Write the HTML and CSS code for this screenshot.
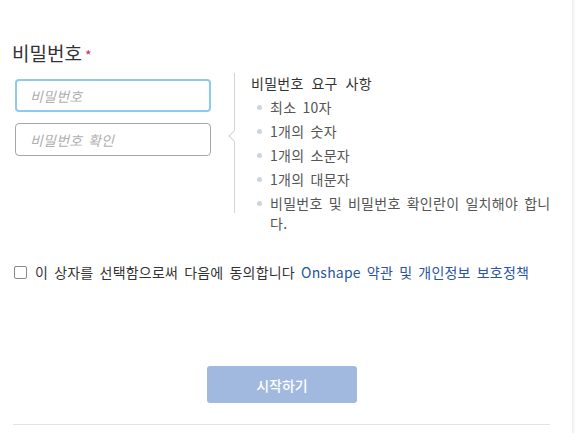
FILE: index.html
```html
<!DOCTYPE html>
<html lang="ko">
<head>
<meta charset="utf-8">
<link rel="stylesheet" href="styles.css">
</head>
<body>
<div class="page">
  <div class="label">비밀번호<span class="req">*</span></div>
  <div class="pw-row">
    <div class="inputs">
      <input class="field focus" type="password" placeholder="비밀번호">
      <input class="field" type="password" placeholder="비밀번호 확인">
    </div>
    <div class="popover">
      <span class="arrow"></span>
      <div class="pop-title">비밀번호 요구 사항</div>
      <ul class="reqs">
        <li>최소 10자</li>
        <li>1개의 숫자</li>
        <li>1개의 소문자</li>
        <li>1개의 대문자</li>
        <li>비밀번호 및 비밀번호 확인란이 일치해야 합니다.</li>
      </ul>
    </div>
  </div>
  <label class="agree">
    <span class="box"></span>
    <span>이 상자를 선택함으로써 다음에 동의합니다 <a class="link">Onshape 약관 및 개인정보 보호정책</a></span>
  </label>
  <div class="actions">
    <button class="start" type="button">시작하기</button>
  </div>
  <div class="divider"></div>
</div>
<div class="edge"></div>
</body>
</html>
```
FILE: styles.css
```css
* { box-sizing: border-box; }
html, body { margin: 0; padding: 0; background: #fff; }
body {
  font-family: "Noto Sans CJK KR", "Noto Sans", sans-serif;
  color: #333;
  width: 575px;
  height: 433px;
  overflow: hidden;
  position: relative;
}
.page {
  padding: 40px 0 0 12px;
  width: 560px;
}
.label {
  font-size: 19px;
  line-height: 26px;
  color: #333;
  display: flex;
  align-items: flex-start;
}
.req {
  color: #c0306a;
  font-size: 14px;
  line-height: 20px;
  margin-left: 3px;
  margin-top: 5px;
}
.pw-row {
  display: flex;
  margin-top: 13px;
}
.inputs {
  display: flex;
  flex-direction: column;
  gap: 11px;
  padding-left: 3px;
  width: 199px;
  flex: none;
}
.field {
  width: 196px;
  height: 33px;
  border: 1px solid #a2a7ad;
  border-radius: 4px;
  padding: 0 14px;
  font-family: "Noto Sans CJK KR", sans-serif;
  font-size: 14px;
  letter-spacing: 0.2px;
  word-spacing: 1.5px;
  outline: none;
  background: #fff;
}
.field.focus {
  border: 2px solid #8ccbef;
  padding: 0 13px;
}
.field::placeholder {
  color: #b0b0b0;
  font-style: italic;
}
.popover {
  position: relative;
  margin-left: 23px;
  margin-top: -6px;
  height: 140px;
  border-left: 1px solid #d4d4d4;
  padding-left: 16px;
  width: 330px;
  flex: none;
}
.arrow {
  position: absolute;
  left: -5px;
  top: 59px;
  width: 8px;
  height: 8px;
  background: #fff;
  border-left: 1px solid #d4d4d4;
  border-bottom: 1px solid #d4d4d4;
  transform: rotate(45deg);
}
.pop-title {
  font-size: 14px;
  line-height: 20px;
  color: #333;
  letter-spacing: 0.3px;
  word-spacing: 3.5px;
}
.reqs {
  list-style: none;
  margin: 4px 0 0;
  padding: 0;
}
.reqs li {
  position: relative;
  padding-left: 19px;
  font-size: 14px;
  line-height: 20px;
  color: #555;
  margin-bottom: 4px;
  letter-spacing: 0.3px;
  word-spacing: 1.8px;
}
.reqs li::before {
  content: "";
  position: absolute;
  left: 6px;
  top: 8px;
  width: 5px;
  height: 5px;
  border-radius: 50%;
  background: #cdd4de;
}
.agree {
  display: flex;
  align-items: center;
  gap: 8px;
  margin-top: 49px;
  padding-left: 2px;
  font-size: 14px;
  line-height: 20px;
  color: #333;
  letter-spacing: 0.2px;
  word-spacing: 2px;
}
.box {
  width: 13px;
  height: 13px;
  border: 1px solid #8a8a8a;
  border-radius: 2px;
  flex: none;
}
.link {
  color: #2a55a0;
}
.actions {
  display: flex;
  justify-content: flex-start;
  margin-top: 84px;
  padding-left: 195px;
}
.start {
  width: 150px;
  height: 37px;
  border: none;
  border-radius: 3px;
  background: #a2b9df;
  color: #fff;
  font-family: "Noto Sans CJK KR", sans-serif;
  font-weight: 500;
  font-size: 14px;
}
.divider {
  margin-top: 21px;
  margin-left: 1px;
  width: 537px;
  height: 1px;
  background: #e3e3e3;
}
.edge {
  position: absolute;
  right: 0;
  top: 0;
  width: 3px;
  height: 433px;
  background: #f7f7f7;
  border-left: 1px solid #eeeeee;
}
```
